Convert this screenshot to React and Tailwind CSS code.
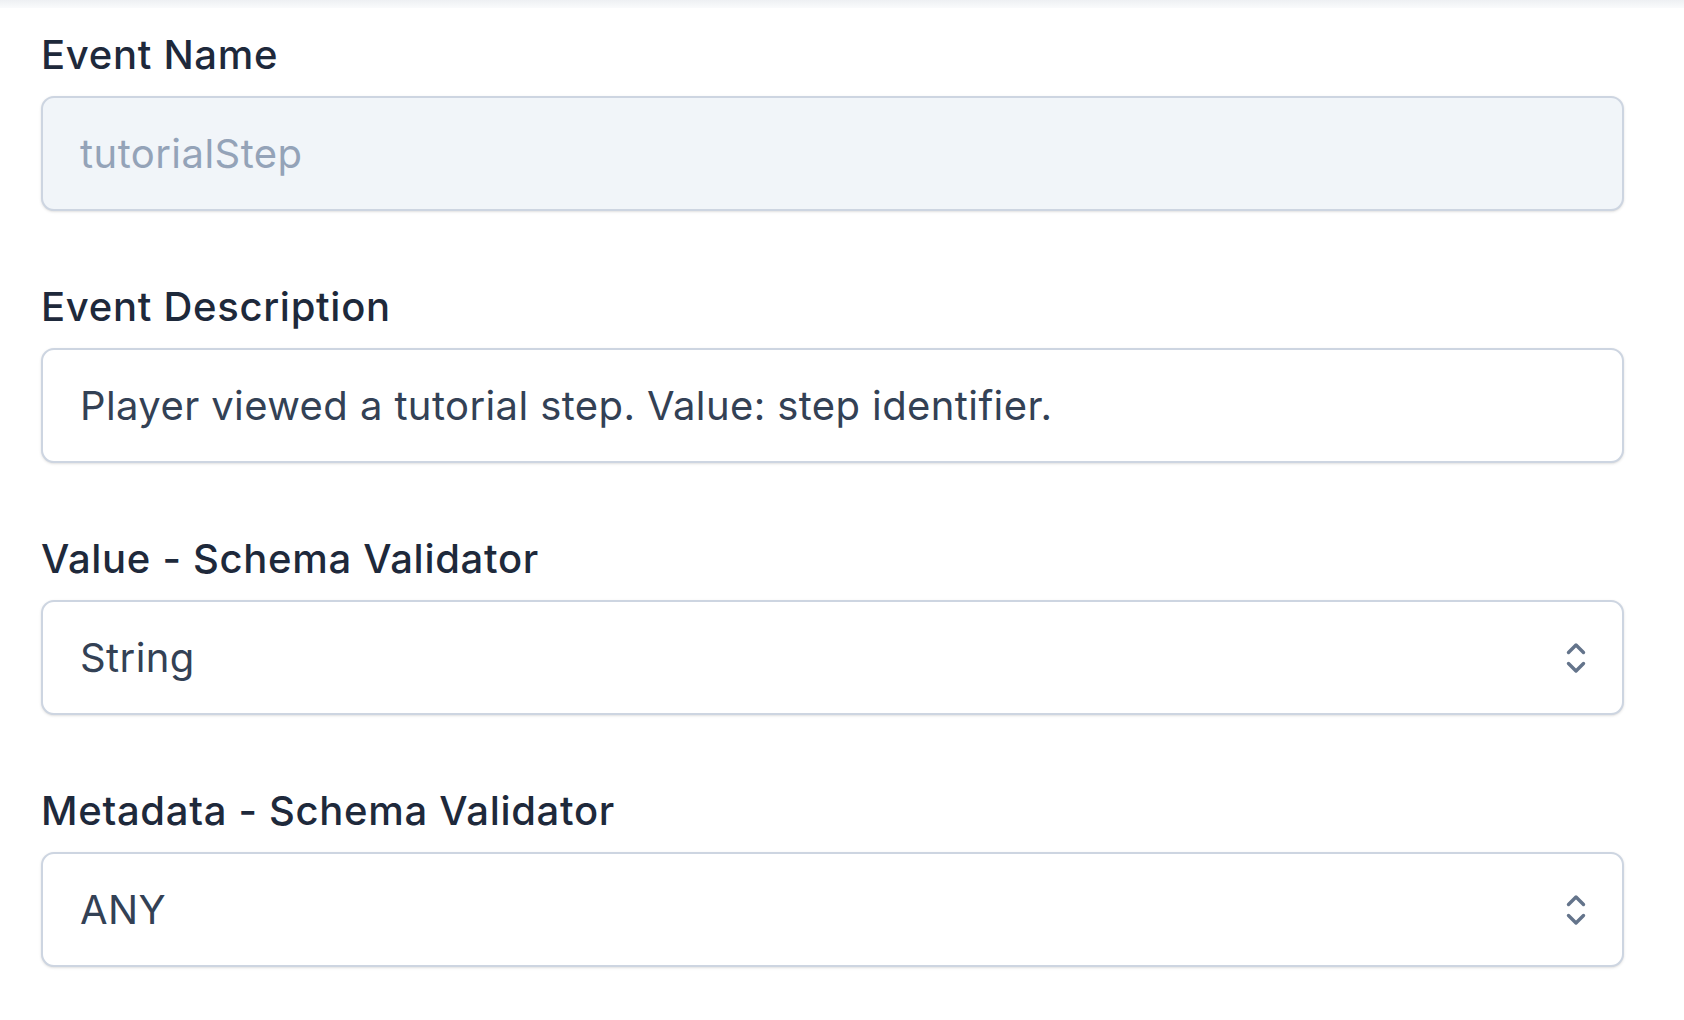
import { useState } from 'react';

const font = { fontFamily: 'Inter, "Noto Sans", sans-serif' };

function ChevronUpDown() {
  return (
    <svg width="20" height="33" viewBox="0 0 20 33" fill="none" stroke="#64748b" strokeWidth="3.4" strokeLinecap="round" strokeLinejoin="round">
      <polyline points="2.5,11 10,3.5 17.5,11" />
      <polyline points="2.5,22 10,29.5 17.5,22" />
    </svg>
  );
}

function Field({ label, children }) {
  return (
    <div className="flex flex-col">
      <label className="text-[40px] leading-[60px] font-medium tracking-[0.7px] text-[#1e293b]">{label}</label>
      <div className="mt-[11px]">{children}</div>
    </div>
  );
}

export default function App() {
  const [desc, setDesc] = useState('Player viewed a tutorial step. Value: step identifier.');
  const [valueType, setValueType] = useState('String');
  const [metaType, setMetaType] = useState('ANY');

  return (
    <div className="min-h-screen bg-white" style={font}>
      <div className="h-[8px] bg-gradient-to-b from-[#eef0f3] to-[#fafbfc]" />
      <div className="pl-[41px] pr-[60px] pt-[17px] flex flex-col gap-[66px]">
        <Field label="Event Name">
          <div className="h-[115px] flex items-center rounded-[13px] border-2 border-[#cdd5e1] bg-[#f1f5f9] shadow-sm pl-[37px]">
            <span className="text-[40px] leading-[60px] tracking-[0.45px] text-[#94a3b8]">tutorialStep</span>
          </div>
        </Field>

        <Field label="Event Description">
          <input
            value={desc}
            onChange={(e) => setDesc(e.target.value)}
            className="w-full h-[115px] rounded-[13px] border-2 border-[#cdd5e1] bg-white shadow-sm pl-[37px] text-[40px] tracking-[0.4px] text-[#334155] outline-none"
          />
        </Field>

        <Field label="Value - Schema Validator">
          <div className="relative">
            <select
              value={valueType}
              onChange={(e) => setValueType(e.target.value)}
              className="appearance-none w-full h-[115px] rounded-[13px] border-2 border-[#cdd5e1] bg-white shadow-sm pl-[37px] text-[40px] tracking-[0.4px] text-[#334155] outline-none"
            >
              <option>String</option>
              <option>Number</option>
              <option>Boolean</option>
            </select>
            <div className="absolute right-[38px] top-1/2 -translate-y-1/2 pointer-events-none flex">
              <ChevronUpDown />
            </div>
          </div>
        </Field>

        <Field label="Metadata - Schema Validator">
          <div className="relative">
            <select
              value={metaType}
              onChange={(e) => setMetaType(e.target.value)}
              className="appearance-none w-full h-[115px] rounded-[13px] border-2 border-[#cdd5e1] bg-white shadow-sm pl-[37px] text-[40px] tracking-[0.4px] text-[#334155] outline-none"
            >
              <option>ANY</option>
              <option>Object</option>
            </select>
            <div className="absolute right-[38px] top-1/2 -translate-y-1/2 pointer-events-none flex">
              <ChevronUpDown />
            </div>
          </div>
        </Field>
      </div>
    </div>
  );
}
